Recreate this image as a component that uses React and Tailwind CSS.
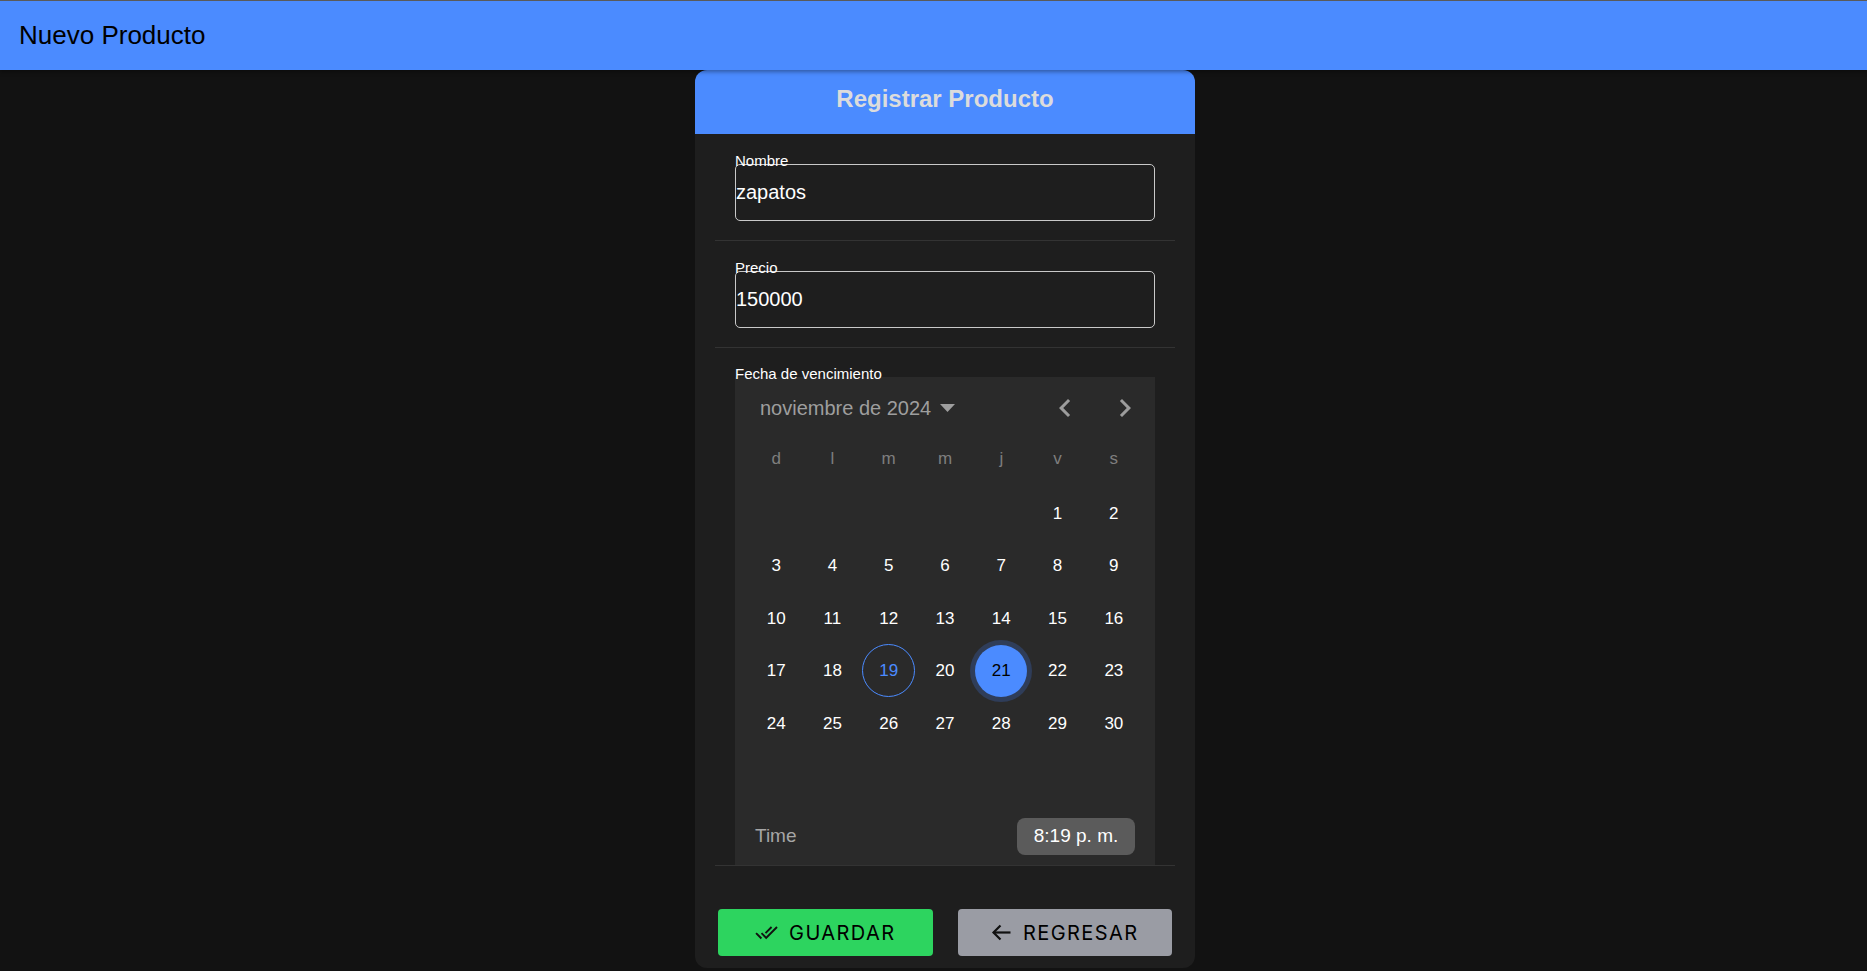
const weekDays = ["d", "l", "m", "m", "j", "v", "s"];

// noviembre 2024 empieza en viernes
const days = [null, null, null, null, null, ...Array.from({ length: 30 }, (_, i) => i + 1)];

const ChevronLeft = () => (
  <svg width="36" height="36" viewBox="0 0 24 24" fill="#9c9c9c">
    <path d="M15.41 16.59 10.83 12l4.58-4.59L14 6l-6 6 6 6z" />
  </svg>
);

const ChevronRight = () => (
  <svg width="36" height="36" viewBox="0 0 24 24" fill="#9c9c9c">
    <path d="M8.59 16.59 13.17 12 8.59 7.41 10 6l6 6-6 6z" />
  </svg>
);

const DoneAll = () => (
  <svg width="23" height="23" viewBox="0 0 24 24" fill="#111">
    <path d="M18 7l-1.41-1.41-6.34 6.34 1.41 1.41L18 7zm4.24-1.41L11.66 16.17 7.48 12l-1.41 1.41L11.66 19l12-12-1.42-1.41zM.41 13.41L6 19l1.41-1.41L1.83 12 .41 13.41z" />
  </svg>
);

const ArrowBack = () => (
  <svg width="20" height="17" viewBox="0 0 20 17" fill="none" stroke="#111" strokeWidth="2.2">
    <path d="M19.5 8.5H2.5" />
    <path d="M9.5 1.5 2.5 8.5l7 7" />
  </svg>
);

const Field = ({ label, value }) => (
  <div className="pl-[20px] pt-[18px] pb-[19px] border-b border-[#333333]">
    <label className="relative z-10 block text-[15px] leading-[17px] mb-[-5px] text-white">
      {label}
    </label>
    <input
      type="text"
      defaultValue={value}
      className="w-[420px] h-[57px] border border-[#c9c9c9] rounded-[5px] bg-transparent text-[20px] text-white outline-none"
    />
  </div>
);

const DayCell = ({ day }) => {
  if (!day) return <div className="h-[52.5px]" />;

  if (day === 21) {
    return (
      <div className="h-[52.5px] flex items-center justify-center">
        <div className="w-[52px] h-[52px] rounded-full bg-[#4b8bff] ring-[5px] ring-[#2f3d59] flex items-center justify-center text-[17px] text-black">
          {day}
        </div>
      </div>
    );
  }

  if (day === 19) {
    return (
      <div className="h-[52.5px] flex items-center justify-center">
        <div className="w-[53px] h-[53px] rounded-full border border-[#4b8bff] flex items-center justify-center text-[17px] text-[#4b8bff]">
          {day}
        </div>
      </div>
    );
  }

  return (
    <div className="h-[52.5px] flex items-center justify-center text-[17px] text-white">
      {day}
    </div>
  );
};

const Calendar = () => (
  <div className="w-[420px] h-[488px] bg-[#2a2a2a] flex flex-col">
    <div className="h-[62px] flex items-center pl-[25px] pr-[12px]">
      <span className="text-[20px] text-[#9e9e9e]">noviembre de 2024</span>
      <svg width="15" height="8" viewBox="0 0 15 8" className="ml-[9px]" fill="#9e9e9e">
        <path d="M0 0h15L7.5 8z" />
      </svg>
      <div className="ml-auto flex gap-[24px]">
        <button className="w-[36px] h-[36px] flex items-center justify-center">
          <ChevronLeft />
        </button>
        <button className="w-[36px] h-[36px] flex items-center justify-center">
          <ChevronRight />
        </button>
      </div>
    </div>

    <div className="px-[13px]">
      <div className="grid grid-cols-7 h-[40px] mb-[8px]">
        {weekDays.map((d, i) => (
          <div key={i} className="flex items-center justify-center text-[17px] text-[#7e7e7e]">
            {d}
          </div>
        ))}
      </div>
      <div className="grid grid-cols-7">
        {days.map((d, i) => (
          <DayCell key={i} day={d} />
        ))}
      </div>
    </div>

    <div className="mt-auto px-[20px] pb-[10px] flex items-center justify-between">
      <span className="text-[19px] text-[#a6a6a6]">Time</span>
      <span className="w-[118px] h-[37px] rounded-[8px] bg-[#5b5b5b] flex items-center justify-center text-[19px] text-white">
        8:19 p. m.
      </span>
    </div>
  </div>
);

export default function App() {
  return (
    <div className="min-h-screen bg-[#121212] font-['Liberation_Sans',Arial,sans-serif]">
      <header className="relative z-20 h-[70px] border-t border-[#5a5a5a] bg-[#4b8bff] pl-[19px] flex items-center shadow-[0_2px_4px_rgba(0,0,0,0.35)]">
        <h1 className="text-[26px] text-black">Nuevo Producto</h1>
      </header>

      <main className="flex justify-center pl-[23px]">
        <div className="w-[500px] rounded-[12px] bg-[#1e1e1e] overflow-hidden">
          <div className="h-[64px] pb-[7px] bg-[#4b8bff] flex items-center justify-center">
            <h2 className="text-[24px] font-bold text-[#dcdcdc]">Registrar Producto</h2>
          </div>

          <form className="px-[20px] pb-[12px]">
            <Field label="Nombre" value="zapatos" />
            <Field label="Precio" value="150000" />

            <div className="border-b border-[#333333]">
              <div className="pl-[20px] pt-[17px]">
                <label className="relative z-10 block text-[15px] leading-[17px] mb-[-5px] text-white">
                  Fecha de vencimiento
                </label>
                <Calendar />
              </div>
            </div>

            <div className="flex gap-[25px] px-[3px] mt-[43px]">
              <button
                type="submit"
                className="w-[215px] h-[47px] rounded-[4px] bg-[#2dd45f] flex items-center justify-center gap-[11px] font-['Inter',sans-serif] font-normal text-[20px] tracking-[0.07em] text-black"
              >
                <DoneAll />
                GUARDAR
              </button>
              <button
                type="button"
                className="w-[215px] h-[47px] rounded-[4px] bg-[#9a9ca4] flex items-center justify-center gap-[12px] font-['Inter',sans-serif] font-normal text-[20px] tracking-[0.07em] text-black"
              >
                <ArrowBack />
                REGRESAR
              </button>
            </div>
          </form>
        </div>
      </main>
    </div>
  );
}
